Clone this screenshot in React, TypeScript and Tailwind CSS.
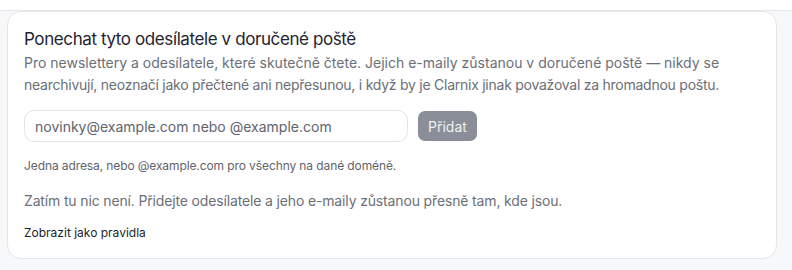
import React from "react";

export default function App() {
  return (
    <div
      className="min-h-[270px] w-full bg-[#f7f8fa]"
      style={{ fontFamily: "Inter, 'Noto Sans', sans-serif" }}
    >
      <div className="h-[11px] w-full border-b border-[#e5e7eb] bg-white" />
      <div className="px-[7px] pr-[15px]">
        <div className="rounded-[14px] border border-[#e3e5e8] bg-white px-4 pt-[15px] pb-[16px]">
          <h3 className="text-[17px] leading-[24px] tracking-[-0.4px] text-[#1f2430]">
            Ponechat tyto odesílatele v doručené poště
          </h3>
          <p className="mt-[1px] text-[14px] leading-[22px] text-[#6b6f78]">
            Pro newslettery a odesílatele, které skutečně čtete. Jejich e-maily zůstanou v doručené poště — nikdy se
            <br />
            <span className="tracking-[-0.25px]">
              nearchivují, neoznačí jako přečtené ani nepřesunou, i když by je Clarnix jinak považoval za hromadnou poštu.
            </span>
          </p>

          <div className="mt-[14px] flex items-center gap-[10px]">
            <input
              type="text"
              placeholder="novinky@example.com nebo @example.com"
              className="h-[32px] w-[384px] rounded-[10px] border border-[#e3e5e8] bg-white px-[10px] text-[14px] text-[#1f2430] placeholder:text-[#5f636c] focus:outline-none"
            />
            <button
              type="button"
              className="h-[30px] rounded-[7px] bg-[#8a8e98] px-[10px] text-[14px] text-[#eef0f3]"
            >
              Přidat
            </button>
          </div>

          <p className="mt-[15px] text-[12px] leading-[18px] tracking-[-0.1px] text-[#5f636c]">
            Jedna adresa, nebo @example.com pro všechny na dané doméně.
          </p>

          <p className="mt-[16px] text-[14px] leading-[20px] tracking-[-0.15px] text-[#6b6f78]">
            Zatím tu nic není. Přidejte odesílatele a jeho e-maily zůstanou přesně tam, kde jsou.
          </p>

          <button type="button" className="mt-[13px] block text-[12px] leading-[18px] text-[#1a1f2c]">
            Zobrazit jako pravidla
          </button>
        </div>
      </div>
    </div>
  );
}
